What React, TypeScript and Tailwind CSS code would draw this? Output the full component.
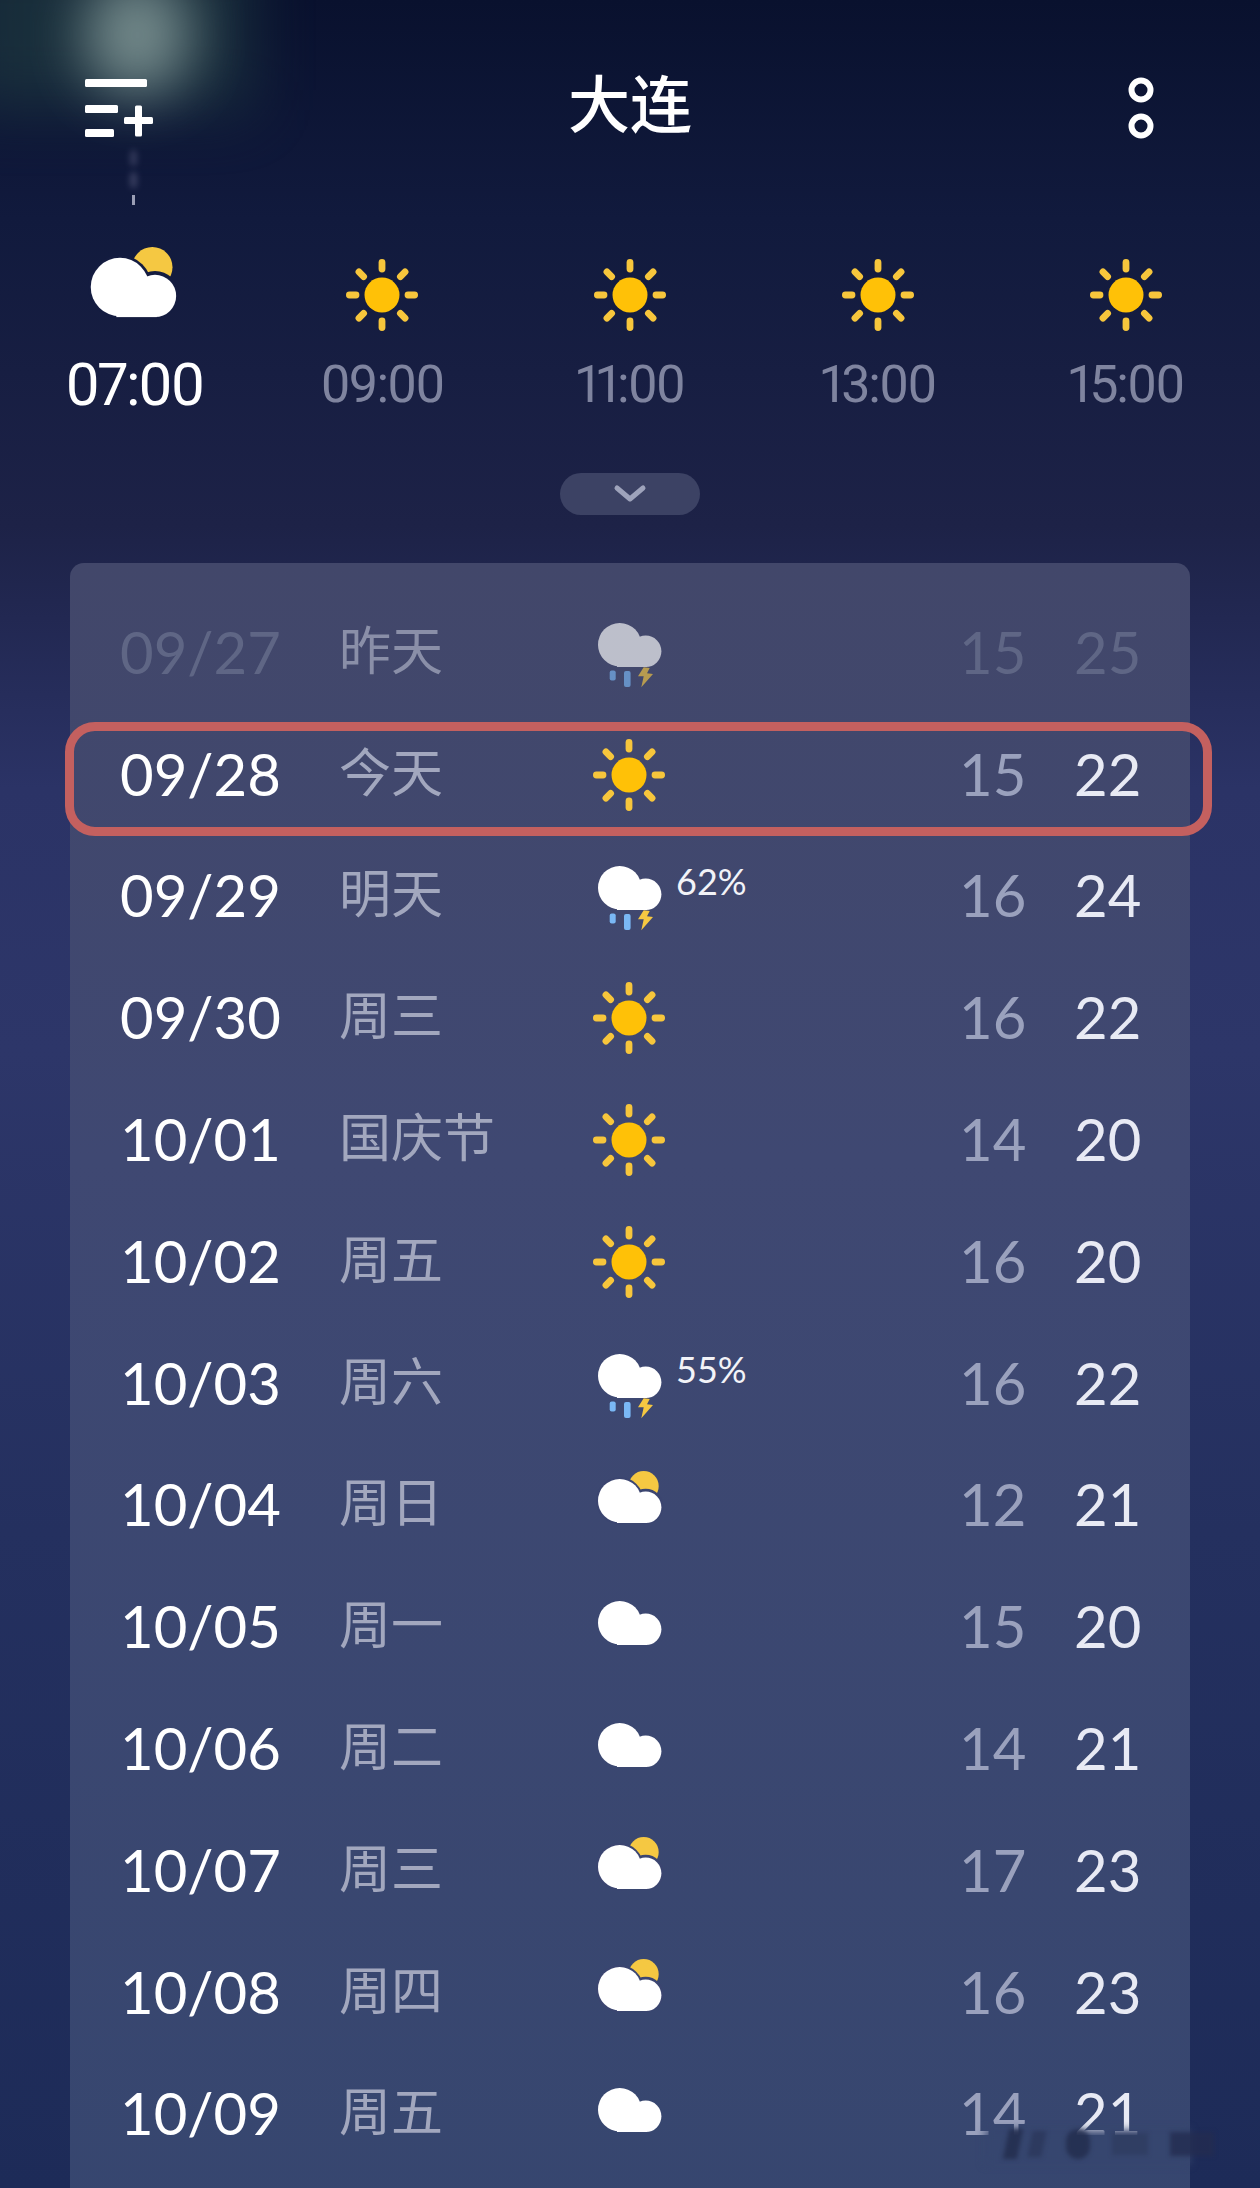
const hours = [
  { time: '07:00', icon: 'partly', active: true },
  { time: '09:00', icon: 'sun' },
  { time: '11:00', icon: 'sun' },
  { time: '13:00', icon: 'sun' },
  { time: '15:00', icon: 'sun' },
];

const days = [
  { date: '09/27', day: '昨天', icon: 'storm', low: 15, high: 25, past: true },
  { date: '09/28', day: '今天', icon: 'sun', low: 15, high: 22, today: true },
  { date: '09/29', day: '明天', icon: 'storm', low: 16, high: 24, rain: '62%' },
  { date: '09/30', day: '周三', icon: 'sun', low: 16, high: 22 },
  { date: '10/01', day: '国庆节', icon: 'sun', low: 14, high: 20 },
  { date: '10/02', day: '周五', icon: 'sun', low: 16, high: 20 },
  { date: '10/03', day: '周六', icon: 'storm', low: 16, high: 22, rain: '55%' },
  { date: '10/04', day: '周日', icon: 'partly', low: 12, high: 21 },
  { date: '10/05', day: '周一', icon: 'cloud', low: 15, high: 20 },
  { date: '10/06', day: '周二', icon: 'cloud', low: 14, high: 21 },
  { date: '10/07', day: '周三', icon: 'partly', low: 17, high: 23 },
  { date: '10/08', day: '周四', icon: 'partly', low: 16, high: 23 },
  { date: '10/09', day: '周五', icon: 'cloud', low: 14, high: 21 },
];

const rays = [0, 45, 90, 135, 180, 225, 270, 315];

function Cloud({ y, color, edge }: { y: number; color: string; edge?: string }) {
  return (
    <g transform={`translate(0 ${y})`}>
      {edge && (
        <g fill={edge}>
          <circle cx="26.7" cy="21.7" r="23.7" />
          <circle cx="52.7" cy="27.4" r="17.7" />
        </g>
      )}
      <g fill={color}>
        <circle cx="26.7" cy="21.7" r="21.7" />
        <circle cx="52.7" cy="28.3" r="15.7" />
        <rect x="24" y="26" width="30" height="18" />
      </g>
    </g>
  );
}

function WeatherIcon({ type, size = 72, edge = '#3b4570' }: { type: string; size?: number; edge?: string }) {
  return (
    <svg width={size} height={size} viewBox="0 0 72 72" className="block overflow-visible">
      {type === 'sun' && (
        <g transform="translate(0 1)">
          <g stroke="#f7c63c" strokeWidth="6.8" strokeLinecap="round">
            {rays.map((r) => (
              <line key={r} x1="36" y1="3.4" x2="36" y2="10" transform={`rotate(${r} 36 36)`} />
            ))}
          </g>
          <circle cx="36" cy="36" r="17.5" fill="#ffc107" />
        </g>
      )}
      {type === 'partly' && (
        <g>
          <circle cx="50.7" cy="18" r="15" fill="#f5c842" />
          <Cloud y={11} color="#ffffff" edge={edge} />
        </g>
      )}
      {type === 'cloud' && <Cloud y={11} color="#ffffff" />}
      {type === 'storm' && (
        <g>
          <Cloud y={7} color="#ffffff" />
          <rect x="16.7" y="54.5" width="6" height="10" rx="2" fill="#7ab8f5" />
          <rect x="31" y="55" width="6.6" height="16" rx="2" fill="#7ab8f5" />
          <polygon points="50.7,51.3 45,60.3 50.7,60.3 48.3,71.3 60,58 54,57.3 56.7,52" fill="#f5c842" />
        </g>
      )}
    </svg>
  );
}

function MenuIcon() {
  return (
    <svg width="70" height="60" viewBox="0 0 70 60" className="block">
      <g fill="#ffffff">
        <rect x="0" y="1" width="62" height="8" rx="1.5" />
        <rect x="0" y="27" width="33" height="8" rx="1.5" />
        <rect x="0" y="51" width="29" height="8" rx="1.5" />
        <rect x="39" y="39" width="29" height="7" rx="1.5" />
        <rect x="50" y="27.5" width="7" height="31" rx="1.5" />
      </g>
    </svg>
  );
}

function DotsIcon() {
  return (
    <svg width="28" height="64" viewBox="0 0 28 64" className="block">
      <g fill="none" stroke="#ffffff" strokeWidth="6">
        <circle cx="14" cy="14" r="9.5" />
        <circle cx="14" cy="50" r="9.5" />
      </g>
    </svg>
  );
}

export default function App() {
  return (
    <div className="relative h-[2188px] w-[1260px] overflow-hidden bg-[linear-gradient(180deg,#09112e_0%,#111a3d_10%,#1d2247_24%,#2b3366_36%,#2d3669_48%,#24305f_70%,#1d2b58_100%)] font-['Lato','Noto_Sans_CJK_SC',sans-serif]">
      {/* Smudges left on the screenshot */}
      <div className="absolute left-[-40px] top-[-60px] h-[170px] w-[290px] bg-[#1f3a40] opacity-70 blur-[30px]" />
      <div className="absolute left-[85px] top-[-25px] h-[120px] w-[105px] rounded-full bg-[#7d9393] opacity-90 blur-[28px]" />
      <div className="absolute left-[130px] top-[150px] h-[16px] w-[7px] rounded-full bg-[#4a4f70] opacity-60 blur-[3px]" />
      <div className="absolute left-[130px] top-[172px] h-[16px] w-[7px] rounded-full bg-[#4a4f70] opacity-70 blur-[3px]" />
      <div className="absolute left-[132px] top-[195px] h-[10px] w-[3px] bg-[#9a9eb4] blur-[0.5px]" />

      <header className="relative grid h-[210px] grid-cols-[1fr_auto_1fr] items-center px-[85px]">
        <div className="mt-[6px]">
          <MenuIcon />
        </div>
        <h1 className="mb-[8px] text-center text-[62px] font-medium leading-none text-white font-['Noto_Sans_CJK_SC',sans-serif]">
          大连
        </h1>
        <div className="mr-[20px] mt-[6px] flex justify-end">
          <DotsIcon />
        </div>
      </header>

      <section className="relative grid grid-cols-5 px-[10px] pt-[34px]">
        {hours.map((h) => (
          <div key={h.time} className="flex flex-col items-center">
            <div className={`flex h-[100px] items-center justify-center ${h.active ? 'mb-[3px] mr-[4px] -mt-[3px]' : ''}`}>
              <WeatherIcon type={h.icon} size={h.active ? 97 : 72} edge="#141c40" />
            </div>
            <div
              className={
                h.active
                  ? "mt-[11px] h-[60px] text-[60px] leading-[60px] tracking-[-2.5px] text-white proportional-nums font-['Roboto',sans-serif]"
                  : "mt-[11px] h-[60px] text-[52px] leading-[60px] tracking-[-2px] text-[#7f849f] proportional-nums font-['Roboto',sans-serif]"
              }
            >
              {h.time}
            </div>
          </div>
        ))}
      </section>

      <div className="relative mt-[58px] flex h-[42px] justify-center">
        <button className="flex w-[140px] items-center justify-center rounded-full bg-[#3c4264]">
          <svg width="34" height="20" viewBox="0 0 34 20">
            <path d="M4 4 L17 15 L30 4" fill="none" stroke="#9ea3bb" strokeWidth="5" strokeLinecap="round" strokeLinejoin="round" />
          </svg>
        </button>
      </div>

      <section className="relative mx-[70px] mt-[48px] h-[1700px] rounded-t-[14px] bg-[linear-gradient(180deg,#42476a_0%,#3f4872_35%,#36466f_100%)] pt-[28px]">
        {days.map((d) => (
          <div
            key={d.date}
            className="relative grid h-[121.8px] grid-cols-[219px_254px_83px_283px_115px_1fr] items-center pl-[50px]"
          >
            <div className={`text-[58px] leading-none ${d.past ? 'text-[#5f6685]' : 'text-white'}`}>{d.date}</div>
            <div
              className={`mb-[8px] text-[52px] leading-none font-['Noto_Sans_CJK_SC',sans-serif] ${
                d.past ? 'text-[#8a8fa8]' : 'text-[#a2a7be]'
              }`}
            >
              {d.day}
            </div>
            <div className={d.past ? 'opacity-65' : ''}>
              <WeatherIcon type={d.icon} />
            </div>
            <div className="mb-[28px] text-[36px] leading-none text-[#f2f3f8]">{d.rain}</div>
            <div className={`text-[58px] leading-none ${d.past ? 'text-[#5f6685]' : 'text-[#9aa1bd]'}`}>{d.low}</div>
            <div className={`text-[58px] leading-none ${d.past ? 'text-[#5f6685]' : 'text-[#e8eaf4]'}`}>{d.high}</div>
            {d.today && (
              <div className="absolute left-[-5px] right-[-22px] top-[9px] h-[114px] rounded-[30px] border-[9px] border-[#c4605f]" />
            )}
          </div>
        ))}
      </section>

      {/* Blurred watermark */}
      <div className="absolute left-[985px] top-[2130px] h-[34px] w-[205px] bg-[#36466f] blur-[4px]" />
      <div className="absolute left-[1006px] top-[2126px] flex h-[36px] w-[220px] items-center gap-[22px] blur-[2px]">
        <div className="h-[30px] w-[14px] -skew-x-12 bg-[#222c4c] opacity-80" />
        <div className="-ml-[12px] h-[26px] w-[14px] -skew-x-12 bg-[#2a3558] opacity-70" />
        <div className="h-[30px] w-[24px] rounded-full bg-[#222c4c] opacity-80" />
        <div className="h-[22px] w-[36px] bg-[#2a3558] opacity-50" />
        <div className="h-[24px] w-[44px] bg-[#232c50] opacity-80" />
      </div>
    </div>
  );
}
